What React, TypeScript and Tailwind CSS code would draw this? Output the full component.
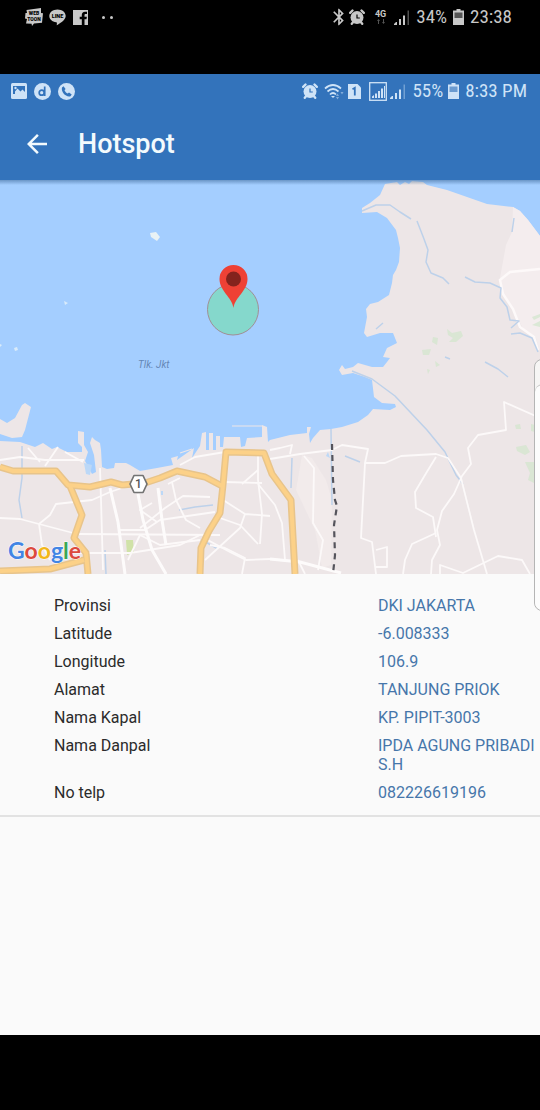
import { MdArrowBack, MdBluetooth } from "react-icons/md";

const details = [
  { label: "Provinsi", value: "DKI JAKARTA" },
  { label: "Latitude", value: "-6.008333" },
  { label: "Longitude", value: "106.9" },
  { label: "Alamat", value: "TANJUNG PRIOK" },
  { label: "Nama Kapal", value: "KP. PIPIT-3003" },
  { label: "Nama Danpal", value: "IPDA AGUNG PRIBADI S.H" },
  { label: "No telp", value: "082226619196" },
];

function AlarmIcon({ hands }: { hands: string }) {
  return (
    <svg viewBox="0 0 16 16" className="h-4 w-4" aria-hidden="true">
      <circle cx="8" cy="8.5" r="6.5" fill="currentColor" />
      <path d="M1.200 3.800 3.500 1.500M14.800 3.800 12.500 1.500M2.800 14.800 4.600 12.600M13.200 14.800 11.400 12.600" stroke="currentColor" strokeWidth="2.400" strokeLinecap="round" />
      <path d="M8 5.500v3.500h2.800" stroke={hands} strokeWidth="1.200" fill="none" />
    </svg>
  );
}

function SignalIcon({ bars }: { bars: number }) {
  return (
    <svg viewBox="0 0 16 16" className="h-4 w-4" fill="currentColor" aria-hidden="true">
      {[0, 1, 2, 3].map((i) => (
        <path
          key={i}
          d={["M0 16v-1l2-2h1v3z", "M5 10h2v6H5z", "M9 6.500h2V16H9z", "M13.500 1.500h1.500V16h-1.500z"][i]}
          opacity={i < bars ? 1 : 0.4}
        />
      ))}
    </svg>
  );
}

function BatteryIcon({ dim }: { dim: string }) {
  return (
    <svg viewBox="0 0 11 16" className="h-4 w-[11px]" aria-hidden="true">
      <path d="M3.500 0h4v1.500H11V16H0V1.500h3.500z" fill="currentColor" />
      <path d="M1.500 3.500h8V9h-8z" fill={dim} />
    </svg>
  );
}

function PhoneStatusBar() {
  return (
    <header className="flex h-[74px] items-start justify-between bg-black pr-7 pl-[25px] text-[#c8c8c8]">
      <div className="flex h-[34px] items-center gap-[6px]">
        <svg viewBox="0 0 18 18" className="h-[18px] w-[18px]" aria-label="Webtoon">
          <path d="M1.500 2 16 0v5l2 .3-1 9.500-8 .7-2 2.500-.4-2.300L1 15.500 2 11 0 10.500.5 5h1.500z" fill="currentColor" />
          <text textAnchor="middle" fontSize="5" fontWeight="900" fill="#000" fontFamily="Roboto, sans-serif">
            <tspan x="9" y="7">WEB</tspan>
            <tspan x="9" y="13">TOON</tspan>
          </text>
        </svg>
        <svg viewBox="0 0 17 17" className="h-[17px] w-[17px]" aria-label="Line">
          <path d="M8.500.5C4 .5.300 3.300.300 7c0 3.200 2.800 5.700 7 6.300.9.200.6 1.500.4 2.900 2.500-1.200 9-5 9-9.200C16.700 3.300 13 .5 8.500.5z" fill="currentColor" />
          <text x="8.500" y="9" textAnchor="middle" fontSize="5.500" fontWeight="900" fill="#000" fontFamily="Roboto, sans-serif">LINE</text>
        </svg>
        <svg viewBox="0 0 15 15" className="ml-px h-[15px] w-[15px]" aria-label="Facebook">
          <path d="M0 0h15v15h-3.500V9.300h2l.4-2.500h-2.400V5.300c0-.8.300-1.300 1.400-1.300h1.100V1.700h-2C9.800 1.700 8.800 3 8.800 5v1.800H6.700v2.500h2.100V15H0z" fill="currentColor" />
        </svg>
        <span className="ml-2 flex gap-[5px]">
          <span className="h-[3px] w-[3px] rounded-full bg-current" />
          <span className="h-[3px] w-[3px] rounded-full bg-current" />
        </span>
      </div>
      <div className="flex h-[34px] items-center">
        <MdBluetooth className="h-5 w-5" aria-hidden="true" />
        <AlarmIcon hands="#000" />
        <span className="ml-[10px] flex flex-col items-center text-[9px] leading-[9px] font-bold">
          4G
          <svg viewBox="0 0 8 5" className="h-[5px] w-2" aria-hidden="true">
            <path d="M0 2 1.500 0 3 2H2v3H1V2zM5 3h1V0h1v3h1L6.500 5z" fill="#555" />
          </svg>
        </span>
        <span className="ml-2"><SignalIcon bars={3} /></span>
        <span className="ml-[6px] font-['Roboto_Condensed','Roboto',sans-serif] text-[19px]">34%</span>
        <span className="ml-[6px]"><BatteryIcon dim="#555" /></span>
        <span className="ml-[6px] font-['Roboto_Condensed','Roboto',sans-serif] text-[19px]">23:38</span>
      </div>
    </header>
  );
}

function AppStatusBar() {
  return (
    <div className="flex h-[34px] items-center justify-between pr-[13px] pl-[11px] text-[#cfe3f7]">
      <div className="flex items-center gap-[7px]">
        <svg viewBox="0 0 16 16" className="h-4 w-4" aria-hidden="true">
          <rect width="16" height="16" rx="1.500" fill="currentColor" />
          <path d="M2 3h12v6l-2.500-2.500-2 2L6.500 5.500 4 8.500V11H2z" fill="#3373bb" />
          <circle cx="4.500" cy="5" r="1.200" fill="currentColor" />
        </svg>
        <svg viewBox="0 0 17 17" className="h-[17px] w-[17px]" aria-hidden="true">
          <circle cx="8.500" cy="8.500" r="8.500" fill="currentColor" />
          <circle cx="7.700" cy="9.700" r="2.500" fill="none" stroke="#3373bb" strokeWidth="1.700" />
          <path d="M10.700 3.500v9.500" stroke="#3373bb" strokeWidth="1.700" />
        </svg>
        <svg viewBox="0 0 17 17" className="h-[17px] w-[17px]" aria-hidden="true">
          <circle cx="8.500" cy="8.500" r="8.500" fill="currentColor" />
          <path d="M4 4.500 5.500 3.200 7.600 6 6.500 7.300c.7 1.500 1.700 2.500 3.200 3.300l1.300-1 2.700 2-1.200 1.600C8 14.500 2.700 9 4 4.500z" fill="#3373bb" />
        </svg>
      </div>
      <div className="flex items-center">
        <AlarmIcon hands="#3373bb" />
        <svg viewBox="0 0 21 17" className="ml-[6px] h-[17px] w-[21px]" fill="none" stroke="currentColor" aria-hidden="true">
          <path d="M1 5.500Q9 -1.500 17 5.500M3.500 8.500Q9 3.500 14.500 8.500M6 11.500Q9 8.500 12 11.500" strokeWidth="1.700" />
          <path d="m7 13 2 2 2-2z" fill="currentColor" stroke="none" />
          <path d="m12 13 1.500-2.500L15 13zM12 14l1.500 2.500L15 14zM16.500 9l1.500 2.500L19.500 9z" fill="currentColor" stroke="none" opacity=".5" />
        </svg>
        <svg viewBox="0 0 13 15" className="ml-[3px] h-[15px] w-[13px]" aria-hidden="true">
          <path d="M0 0h9.500L13 3.500V15H0z" fill="currentColor" />
          <path d="M4.500 5.200 6.800 3.800V11.500" fill="none" stroke="#3373bb" strokeWidth="1.800" />
        </svg>
        <svg viewBox="0 0 18 19" className="ml-2 h-[19px] w-[18px]" aria-hidden="true">
          <rect x=".7" y=".7" width="16.600" height="17.600" fill="none" stroke="currentColor" strokeWidth="1.300" />
          <path d="M3 16v-1.500l2-1.500v3zM6 11.500h2v4.500H6zM9 9h2v7H9zM12 6.500h2V16h-2zM15 4h1v12h-1z" fill="currentColor" />
        </svg>
        <span className="ml-[3px]"><SignalIcon bars={3} /></span>
        <span className="ml-[6px] font-['Roboto_Condensed','Roboto',sans-serif] text-[19px]">55%</span>
        <span className="ml-[5px]"><BatteryIcon dim="#6b9bd0" /></span>
        <span className="ml-[6px] font-['Roboto_Condensed','Roboto',sans-serif] text-[19px]">8:33 PM</span>
      </div>
    </div>
  );
}

const minorRoads = [
  "M0 518 20 519 39 524 77 534 220 535",
  "M0 460 20 457 45 460 84 460M28 448 40 462M45 466 58 447M65 452 83 462",
  "M39 524 50 515 56 504 92 500 110 492 140 482",
  "M39 524 42 545 50 560M100 468 101 500 103 570M110 488 118 522 125 574",
  "M138 494 143 520 152 550 166 574M158 488 162 520 166 545",
  "M140 528 165 508 183 496 210 497M120 530 145 530 160 520 215 512",
  "M172 482 176 500 186 520 200 528M80 553 130 553 180 545 200 535",
  "M128 560 140 535 160 545 200 540M168 484 180 478M152 503 140 510 157 522",
  "M220 498 245 514 240 528 205 560M245 514 270 516M204 538 230 552 246 560 270 559",
  "M210 545 225 548 245 558 242 574M220 518 240 525 258 544M258 450 258 480 262 514 260 544",
  "M225 482 262 483M180 465 195 457 225 452M242 484 258 470M258 484 275 505 282 523 285 560",
  "M270 559 300 562 341 573M290 454 292 445 280 448 270 450M270 459 300 454 332 450 342 445 368 449 365 463 361 538 372 542 376 574M376 550 387 547 387 567 376 567",
  "M365 463 385 463 401 456 436 454 448 458 461 478 474 530 487 574M436 457 425 475 415 492 416 508 433 517 436 537",
  "M436 533 412 544 405 560 403 574M540 418 504 402 506 430 478 435 468 448 471 464 462 476 454 494 442 511 437 530 440 545 432 560 431 574",
  "M440 574V565L463 573 498 556 522 560 530 574",
  "M304 456 314 468 313 523 323 540 318 570M298 560 305 574",
];

const waterways = [
  "M22 446 22 478 19 500 22 518M331 429 332 505M105 550 106 574",
  "M179 510 195 507 213 505M345 456 360 462M202 540 218 549",
  "M352 371 372 379 395 396 427 430 445 452 456 475 463 484",
  "M362 211 376 205 390 205 400 212 411 219M417 221 424 239 428 250 426 262 431 273 443 278 449 284",
  "M465 277 475 282 490 283 501 288 500 298 507 307 510 320 519 321 511 328M511 334 520 333 532 338 538 352",
  "M514 218 512 232M376 329 383 323M445 357 450 359M485 362 498 369 508 377M292 458 291 488",
];

const highways = [
  "M0 467 13 471 56 471 68 485 90 487 111 482 122 485 145 483 160 478 177 471 205 477 222 486",
  "M70 486 82 515 74 538 86 553 88 574M0 571 50 569 84 560",
  "M200 574 201 548 209 531 220 513 223 485 226 452 264 453 272 474 291 500 295 574",
];

function HotspotMap() {
  return (
    <svg
      viewBox="0 180 540 394"
      preserveAspectRatio="xMidYMid slice"
      className="block h-[394px] w-full bg-[#a4ceff]"
      role="img"
      aria-label="Peta hotspot Teluk Jakarta"
    >
      <defs>
        <linearGradient id="barShadow" x1="0" y1="0" x2="0" y2="1">
          <stop offset="0" stopColor="#24507f" stopOpacity=".45" />
          <stop offset="1" stopColor="#24507f" stopOpacity="0" />
        </linearGradient>
      </defs>
      <rect y="180" width="540" height="394" fill="#a4ceff" />
      <path
        d="M540 236 528 220 520 211 513 207 487 204 467 197 447 190 427 185 423 182 412 181 409 184 405 182 400 185 397 182 385 184 380 195 370 203 362 208 362 213 377 212 387 218 396 230 398 238 400 248 399 262 396 270 393 275 392 283 389 295 378 302 370 304 366 309 367 317 364 333 367 337 380 333 393 333 397 343 387 348 383 357 390 358 387 362 383 367 372 367 358 363 353 367 345 369 342 365 339 370 342 375 353 373 365 377 372 380 374 397 382 403 395 404 396 407 390 410 373 409 368 415 358 422 342 427 331 429 320 430 313 438 310 443 309 434 311 427 307 427 307 433 290 435 270 440 268 442 267 427 262 425 262 437 247 438 245 446 241 447 240 437 224 437 223 447 220 447 220 436 216 436 216 450 213 450 213 433 209 433 209 450 206 450 206 432 202 433 200 446 192 458 194 448 177 460 178 456 171 458 173 465 157 468 140 471 130 465 126 463 115 463 114 468 107 469 102 467 101 450 100 443 95 440 92 437 90 443 94 455 96 472 92 474 85 461 88 452 84 445 84 432 78 431 78 443 82 447 82 452 67 452 57 447 52 449 43 443 35 447 20 442 0 441V574H540z"
        fill="#ede6e7"
      />
      <path d="M0 419 7 423 15 418 22 405 25 403 31 407 25 430 22 437 12 438 0 434z" fill="#ede6e7" />
      <path d="M150 233 156 232 160 237 157 241 151 237z" fill="#e9f2f5" />
      <path d="M64 301 68 303 65 305zM14 348 17 347 18 350 15 351zM0 344 2 345 0 347z" fill="#d9ebfa" />
      <path d="M513 207 520 211 528 220 540 236V352L536 338 525 332 512 308 501 290 500 278 506 245 512 232z" fill="#f4edee" />
      <path d="M540 269 510 272 500 280 503 294 513 309 520 327 534 337 538 350" fill="none" stroke="#fdf9f9" strokeWidth="2.500" />
      <path d="M302 455 312 458 326 480 332 500 331 565 322 568 315 530 296 490z" fill="#f3ecec" opacity=".7" />
      <path d="M232 426H262M180 453 192 449" stroke="#ede6e7" strokeWidth="1.200" />
      <g fill="#d3e6ce" opacity=".75">
        <path d="M422 350 431 349 429 355 423 355zM433 337 438 338 437 345 432 342zM447 329 452 333 461 331 463 336 456 342 449 342 453 338 448 335zM435 361 440 365 436 367zM427 369 430 370 428 374zM516 447 526 445 530 452 525 455 517 451zM525 462 534 462V483L528 480 530 473zM515 425 520 424 521 429 516 429zM531 424 535 425V432L531 431zM532 317 540 314V317L534 320zM532 325 540 321V327z" />
      </g>
      <path d="M126 540 133 540 134 553 127 555z" fill="#d0e2a8" />
      <path d="M84 463 92 465 90 475 86 474zM326 456 328 452 330 458zM161 491h2v4h-2z" fill="#bcd8f7" />
      {waterways.map((d) => (
        <path key={d} d={d} fill="none" stroke="#bdd1ea" strokeWidth="1.500" strokeLinejoin="round" />
      ))}
      {minorRoads.map((d) => (
        <path key={d} d={d} fill="none" stroke="#fcf9f9" strokeWidth="1.800" strokeLinejoin="round" />
      ))}
      <path d="M110 488 118 522 125 574M138 494 143 520 152 550 166 574M158 488 162 520 166 545M270 559 300 562 341 573" fill="none" stroke="#fdfbfb" strokeWidth="3" />
      {highways.map((d) => (
        <path key={d} d={d} fill="none" stroke="#e8c48a" strokeWidth="7" strokeLinejoin="round" />
      ))}
      {highways.map((d) => (
        <path key={d} d={d} fill="none" stroke="#fcd188" strokeWidth="4" strokeLinejoin="round" />
      ))}
      <path d="M332 444 333 480 335 500 337 506 334 525 335 555 333 574" fill="none" stroke="#55545c" strokeWidth="2.200" strokeDasharray="6 5" />
      <path d="M134 475.500h9l4 8.500-4 8.500h-9l-4-8.500z" fill="#fff" stroke="#737373" strokeWidth="1.700" strokeLinejoin="round" />
      <text x="138.500" y="488" textAnchor="middle" fontSize="12" fontWeight="500" fill="#555" fontFamily="Roboto, sans-serif">1</text>
      <text x="138" y="368" fontSize="10" fontStyle="italic" fill="#6486b6" fontFamily="Roboto, sans-serif">Tlk. Jkt</text>
      <circle cx="233" cy="309.500" r="25.500" fill="#85d8cc" stroke="#a08f94" strokeWidth="1" />
      <path d="M233.500 308C232 297 219.500 291 219.500 279a14 14 0 0 1 28 0C247.500 291 235 297 233.500 308z" fill="#ee4135" />
      <circle cx="233.500" cy="279" r="7.500" fill="#84231d" />
      <text x="8" y="559" fontSize="23" fontWeight="700" fontFamily="Lato, sans-serif" stroke="#fff" strokeWidth="1" paintOrder="stroke" strokeLinejoin="round">
        <tspan fill="#4285e4">G</tspan><tspan fill="#dc4a3e">o</tspan><tspan fill="#f2b719">o</tspan><tspan fill="#4285e4">g</tspan><tspan fill="#3aa757">l</tspan><tspan fill="#dc4a3e">e</tspan>
      </text>
      <rect y="180" width="540" height="5" fill="url(#barShadow)" />
    </svg>
  );
}

export default function App() {
  return (
    <div className="flex min-h-screen flex-col bg-black font-['Roboto',sans-serif]">
      <PhoneStatusBar />
      <div className="relative flex flex-1 flex-col overflow-hidden bg-[#fafafa]">
        <div className="bg-[#3373bb]">
          <AppStatusBar />
          <div className="flex h-[72px] items-center pl-[22px] text-[#f3fafd]">
            <button type="button" aria-label="Kembali" className="flex">
              <MdArrowBack className="h-[30px] w-[30px]" />
            </button>
            <h1 className="ml-[26px] text-[27px] leading-8 font-medium">Hotspot</h1>
          </div>
        </div>
        <HotspotMap />
        <dl className="flex flex-col gap-[9px] border-b-2 border-[#e2e2e2] pt-[22px] pb-[13px] pl-[54px] text-[16px] leading-[19px]">
          {details.map(({ label, value }) => (
            <div key={label} className="grid grid-cols-[2fr_1fr]">
              <dt className="text-[#2b2b2b]">{label}</dt>
              <dd className="text-[#4676aa]">{value}</dd>
            </div>
          ))}
        </dl>
        <div className="absolute top-[285px] -right-2 h-[252px] w-[14px] rounded-l-lg border border-[#b5b5b5] bg-[#f6f6f5]/90 pt-6">
          <div className="h-full rounded-l-lg border-t border-[#c4c4c4] bg-[#fcfcfc]" />
        </div>
      </div>
      <footer className="h-[75px] bg-black" />
    </div>
  );
}
